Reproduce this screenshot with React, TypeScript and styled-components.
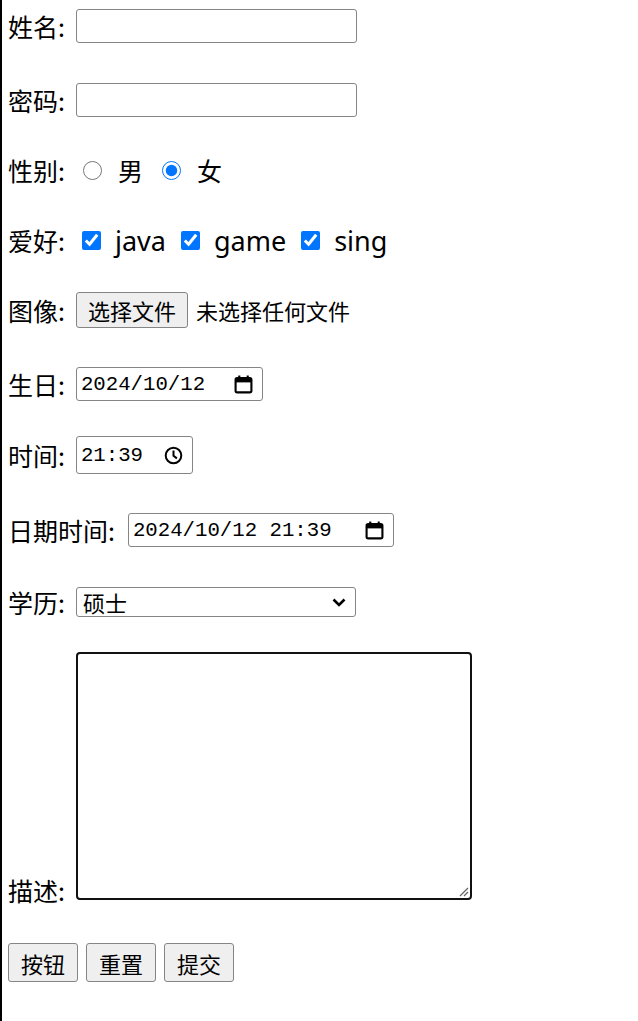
import styled, { createGlobalStyle } from 'styled-components'

const GlobalStyle = createGlobalStyle`
  html, body {
    margin: 0;
    background: #fff;
  }
  body {
    box-sizing: border-box;
    min-height: 100vh;
    border-left: 2px solid #000;
    padding: 0 6px;
    color: #000;
    font-family: "Noto Sans CJK SC", "Noto Sans", sans-serif;
  }
`

const Form = styled.form`
  display: flex;
  flex-direction: column;
`

const Row = styled.div<{ $top: number; $h: number; $bottom?: boolean }>`
  display: flex;
  align-items: ${p => (p.$bottom ? 'flex-end' : 'center')};
  height: ${p => p.$h}px;
  margin-top: ${p => p.$top}px;
`

const Label = styled.span<{ $gap?: number }>`
  font-size: 25px;
  line-height: 1;
  margin-right: ${p => p.$gap ?? 11}px;
  white-space: nowrap;
`

const TextInput = styled.input`
  box-sizing: border-box;
  width: 281px;
  height: 34px;
  margin: 0;
  border: 1px solid #858585;
  border-radius: 3px;
  background: #fff;
  font-size: 20px;
`

const Radio = styled.input`
  width: 19px;
  height: 19px;
  margin: 0 16px 0 7px;
  accent-color: #0075ff;
`

const Check = styled.input`
  width: 19px;
  height: 19px;
  margin: 0 14px 0 6px;
  accent-color: #0075ff;
`

const OptionText = styled.span<{ $latin?: boolean }>`
  font-family: ${p => (p.$latin ? '"Noto Sans", sans-serif' : '"Noto Sans CJK SC", sans-serif')};
  font-size: ${p => (p.$latin ? 27 : 25)}px;
  line-height: 1;
  margin-right: ${p => (p.$latin ? 9 : 12)}px;
`

const PlainButton = styled.button<{ $w: number; $h: number }>`
  box-sizing: border-box;
  width: ${p => p.$w}px;
  height: ${p => p.$h}px;
  margin: 0;
  padding: 0;
  border: 1px solid #858585;
  border-radius: 3px;
  background: #efefef;
  color: #000;
  font-family: "Noto Sans CJK SC", sans-serif;
  font-size: 22px;
  line-height: 1;
`

const FileNote = styled.span`
  margin-left: 8px;
  font-size: 22px;
  line-height: 1;
`

const FieldBox = styled.div<{ $w: number; $h: number }>`
  box-sizing: border-box;
  display: flex;
  align-items: center;
  width: ${p => p.$w}px;
  height: ${p => p.$h}px;
  padding: 0 9px 0 4px;
  border: 1px solid #858585;
  border-radius: 3px;
  font-family: "Liberation Mono", "DejaVu Sans Mono", monospace;
  font-size: 20.7px;
`

const FieldText = styled.span`
  flex: 1;
  white-space: pre;
`

const SelectBox = styled.div`
  box-sizing: border-box;
  display: flex;
  align-items: center;
  width: 280px;
  height: 30px;
  padding: 0 9px 0 6px;
  border: 1px solid #858585;
  border-radius: 3px;
  font-size: 22px;
  line-height: 1;
`

const Area = styled.div`
  position: relative;
  box-sizing: border-box;
  width: 396px;
  height: 248px;
  margin-bottom: 3px;
  border: 2.5px solid #111;
  border-radius: 4px;
  background: #fff;
`

const Grip = styled.svg`
  position: absolute;
  right: 1px;
  bottom: 1px;
`

const ButtonBar = styled.div`
  display: flex;
  gap: 8px;
`

const CalendarIcon = () => (
  <svg width="19" height="19" viewBox="0 0 18 18">
    <rect x="1.5" y="3" width="15" height="13.5" rx="1.5" fill="none" stroke="#000" strokeWidth="2" />
    <rect x="1.5" y="3" width="15" height="4" fill="#000" />
    <rect x="4" y="0.5" width="2" height="3" fill="#000" />
    <rect x="12" y="0.5" width="2" height="3" fill="#000" />
  </svg>
)

const ClockIcon = () => (
  <svg width="19" height="19" viewBox="0 0 19 19">
    <circle cx="9.5" cy="9.5" r="7.8" fill="none" stroke="#000" strokeWidth="2" />
    <path d="M9.5 4.6v5.2l3.4 2.6" fill="none" stroke="#000" strokeWidth="2" />
  </svg>
)

const Chevron = () => (
  <svg width="14" height="9" viewBox="0 0 14 9">
    <path d="M1.5 1.5l5.5 5.5 5.5-5.5" fill="none" stroke="#000" strokeWidth="2.6" />
  </svg>
)

function App() {
  return (
    <>
      <GlobalStyle />
      <Form>
        <Row $top={8} $h={36}>
          <Label>姓名:</Label>
          <TextInput type="text" />
        </Row>
        <Row $top={38} $h={36}>
          <Label>密码:</Label>
          <TextInput type="password" />
        </Row>
        <Row $top={34} $h={36}>
          <Label>性别:</Label>
          <Radio type="radio" name="sex" />
          <OptionText>男</OptionText>
          <Radio type="radio" name="sex" defaultChecked />
          <OptionText>女</OptionText>
        </Row>
        <Row $top={34} $h={36}>
          <Label>爱好:</Label>
          <Check type="checkbox" defaultChecked />
          <OptionText $latin>java</OptionText>
          <Check type="checkbox" defaultChecked />
          <OptionText $latin>game</OptionText>
          <Check type="checkbox" defaultChecked />
          <OptionText $latin>sing</OptionText>
        </Row>
        <Row $top={34} $h={36}>
          <Label>图像:</Label>
          <PlainButton type="button" $w={112} $h={36}>选择文件</PlainButton>
          <FileNote>未选择任何文件</FileNote>
        </Row>
        <Row $top={38} $h={36}>
          <Label>生日:</Label>
          <FieldBox $w={187} $h={34}>
            <FieldText>2024/10/12</FieldText>
            <CalendarIcon />
          </FieldBox>
        </Row>
        <Row $top={34} $h={38}>
          <Label>时间:</Label>
          <FieldBox $w={117} $h={38}>
            <FieldText>21:39</FieldText>
            <ClockIcon />
          </FieldBox>
        </Row>
        <Row $top={38} $h={36}>
          <Label $gap={13}>日期时间:</Label>
          <FieldBox $w={266} $h={34}>
            <FieldText>2024/10/12 21:39</FieldText>
            <CalendarIcon />
          </FieldBox>
        </Row>
        <Row $top={36} $h={36}>
          <Label>学历:</Label>
          <SelectBox>
            <FieldText>硕士</FieldText>
            <Chevron />
          </SelectBox>
        </Row>
        <Row $top={30} $h={253} $bottom>
          <Label>描述:</Label>
          <Area>
            <Grip width="12" height="12" viewBox="0 0 12 12">
              <path d="M11 3L3 11M11 7L7 11" stroke="#666" strokeWidth="1.3" />
            </Grip>
          </Area>
        </Row>
        <Row $top={40} $h={39}>
          <ButtonBar>
            <PlainButton type="button" $w={70} $h={39}>按钮</PlainButton>
            <PlainButton type="reset" $w={70} $h={39}>重置</PlainButton>
            <PlainButton type="submit" $w={70} $h={39}>提交</PlainButton>
          </ButtonBar>
        </Row>
      </Form>
    </>
  )
}

export default App
